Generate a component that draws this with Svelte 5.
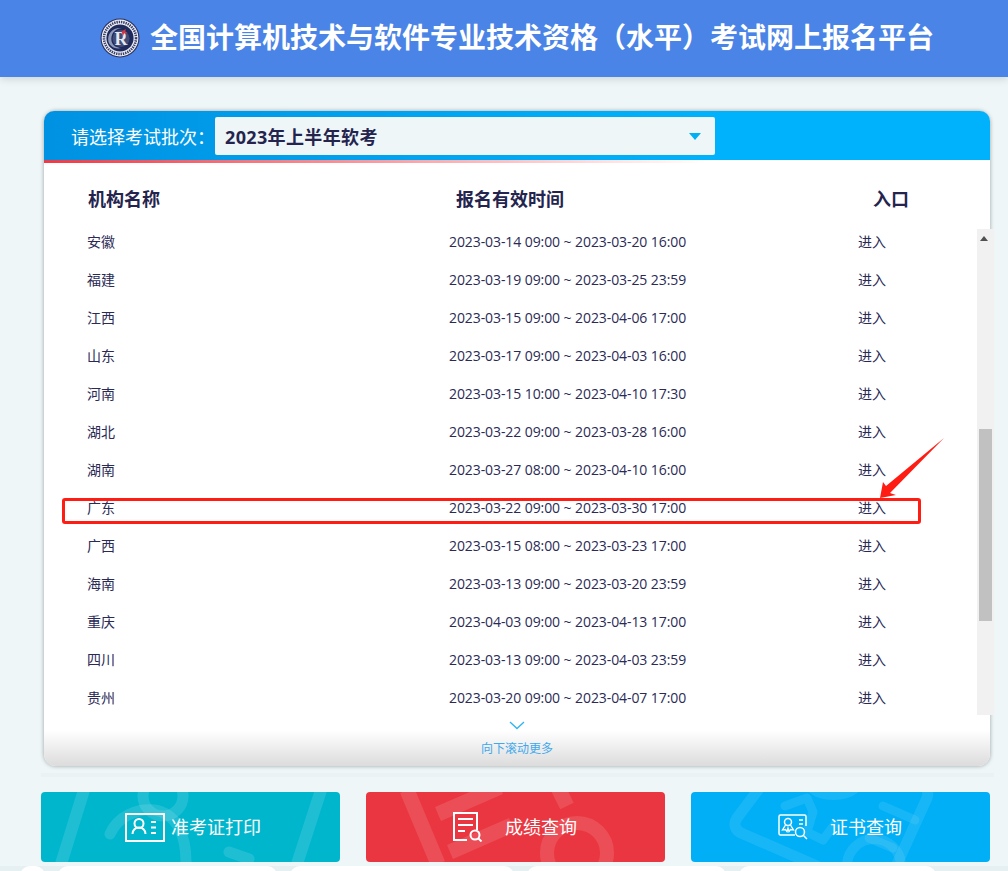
<script lang="ts">
	const rows = [
		['安徽', '2023-03-14 09:00 ~ 2023-03-20 16:00'],
		['福建', '2023-03-19 09:00 ~ 2023-03-25 23:59'],
		['江西', '2023-03-15 09:00 ~ 2023-04-06 17:00'],
		['山东', '2023-03-17 09:00 ~ 2023-04-03 16:00'],
		['河南', '2023-03-15 10:00 ~ 2023-04-10 17:30'],
		['湖北', '2023-03-22 09:00 ~ 2023-03-28 16:00'],
		['湖南', '2023-03-27 08:00 ~ 2023-04-10 16:00'],
		['广东', '2023-03-22 09:00 ~ 2023-03-30 17:00'],
		['广西', '2023-03-15 08:00 ~ 2023-03-23 17:00'],
		['海南', '2023-03-13 09:00 ~ 2023-03-20 23:59'],
		['重庆', '2023-04-03 09:00 ~ 2023-04-13 17:00'],
		['四川', '2023-03-13 09:00 ~ 2023-04-03 23:59'],
		['贵州', '2023-03-20 09:00 ~ 2023-04-07 17:00']
	];

	const peeks = [25, 219, 224, 199, 197];
</script>

<div class="page">
	<header>
		<svg class="logo" viewBox="0 0 40 40" aria-hidden="true">
			<circle cx="20" cy="20" r="19.5" fill="#2b2f5e" />
			<circle cx="20" cy="20" r="18.4" fill="#eef0f4" />
			<circle cx="20" cy="20" r="16" fill="none" stroke="#3b3f6b" stroke-width="2.6" stroke-dasharray="1.4 0.9" />
			<circle cx="20" cy="20" r="13.6" fill="#1f2a5c" />
			<path d="M8.500 24c-2-9 5-15 13-14-7 1-11 6-10 13 1 5 6 7 10 7-6 1.500-11-1-13-6z" fill="#8d97b8" />
			<circle cx="21" cy="20.500" r="8.500" fill="#dfe3ec" opacity="0.18" />
			<text x="21" y="27" text-anchor="middle" class="logo-r">R</text>
			<path d="M21.500 13.500l4.500-2.500-1 2.500 2.500 1-3.500 1-1 2.500z" fill="#d8343f" />
		</svg>
		<h1>全国计算机技术与软件专业技术资格（水平）考试网上报名平台</h1>
	</header>

	<section class="card">
		<div class="bar">
			<span class="bar-label">请选择考试批次：</span>
			<div class="select">
				<span>2023年上半年软考</span>
				<i class="caret"></i>
			</div>
		</div>
		<div class="stripe"></div>

		<div class="thead">
			<span class="col-name">机构名称</span>
			<span class="col-time">报名有效时间</span>
			<span class="col-entry">入口</span>
		</div>

		<div class="body">
			<div class="list">
				{#each rows as [name, time]}
					<div class="row">
						<span class="cell-name">{name}</span>
						<span class="cell-time">{time}</span>
						<span class="cell-entry">进入</span>
					</div>
				{/each}
			</div>
			<div class="scrollbar">
				<i class="scroll-up"></i>
				<div class="thumb"></div>
			</div>
		</div>

		<div class="more">
			<svg class="chevron" viewBox="0 0 16 9" aria-hidden="true">
				<path d="M1 1l7 6.500L15 1" fill="none" stroke="#2fb4f2" stroke-width="1.300" />
			</svg>
			<span>向下滚动更多</span>
		</div>
	</section>

	<div class="divider"></div>

	<nav class="actions">
		<a class="action teal">
			<svg class="deco" viewBox="0 0 299 70" aria-hidden="true">
				<g fill="none" stroke="#fff" stroke-opacity="0.12" stroke-linecap="round">
					<path d="M43-2L20 72M280-2L256 72" stroke-width="12" stroke-linecap="butt" />
					<circle cx="122" cy="4" r="20" stroke-width="11" />
					<path d="M69 42c8-18 28-26 44-24 22 3 32 24 32 52" stroke-width="11" />
					<path d="M188 60l20 7" stroke-width="11" />
				</g>
			</svg>
			<span class="action-in">
				<svg class="ico card-ico" viewBox="0 0 40 29" aria-hidden="true">
					<g fill="none" stroke="#fff">
						<rect x="1" y="1" width="38" height="27" stroke-width="2" />
						<circle cx="14" cy="10.500" r="4.500" stroke-width="2" />
						<path d="M7.500 21c0-4 3-6.500 6.500-6.500s6.500 2.500 6.500 6.500" stroke-width="2" />
						<path d="M26 9h5M26 14.500h5M26 20h5" stroke-width="2" />
					</g>
				</svg>
				<span class="label">准考证打印</span>
			</span>
		</a>

		<a class="action red">
			<svg class="deco" viewBox="0 0 299 70" aria-hidden="true">
				<g fill="none" stroke="#fff" stroke-opacity="0.12">
					<path d="M41-2L72 72" stroke-width="15" />
					<path d="M72 22L134-5M84 60L146 33" stroke-width="15" />
					<path d="M192-4l9 18" stroke-width="15" />
					<circle cx="211" cy="61" r="30" stroke-width="14" />
				</g>
			</svg>
			<span class="action-in">
				<svg class="ico doc-ico" viewBox="0 0 30 30" aria-hidden="true">
					<g fill="none" stroke="#fff" stroke-width="2">
						<path d="M14 28H1V1h23v17" />
						<path d="M5 7h15M5 13h15M5 19h7" />
						<circle cx="22" cy="23" r="4.500" />
						<path d="M25.500 26.500l3 3" />
					</g>
				</svg>
				<span class="label label-red">成绩查询</span>
			</span>
		</a>

		<a class="action blue">
			<svg class="deco" viewBox="0 0 299 70" aria-hidden="true">
				<g fill="none" stroke="#fff" stroke-opacity="0.09" stroke-linecap="round" stroke-linejoin="round">
					<path d="M76-14L46 26c-4 6-2 12 4 15l76 33M210-14c18 2 30 6 26 20l-30 66" stroke-width="11" />
					<path d="M118-8c10 14 38 14 50 0" stroke-width="11" />
					<path d="M94 14l22-8 6 14-6 20 16 8 12-16" stroke-width="9" />
					<path d="M192 14l32 14M178 46l24 10" stroke-width="9" />
					<circle cx="183" cy="74" r="27" stroke-width="10" />
				</g>
			</svg>
			<span class="action-in">
				<svg class="ico cert-ico" viewBox="0 0 30 26" aria-hidden="true">
					<g fill="none" stroke="#fff">
						<path d="M17 21H2.500Q1 21 1 19.500V2.500Q1 1 2.500 1h24Q28 1 28 2.500V12" stroke-width="1.500" />
						<circle cx="10" cy="8" r="3.500" stroke-width="1.500" />
						<path d="M7.500 11L4.500 16l3-.5 1.500 2 1-3.500 1 3.500 1.500-2 3 .5-3-5" stroke-width="1.300" />
						<path d="M21 6h4M21 10h4" stroke-width="1.300" />
						<circle cx="22" cy="18" r="4.500" stroke-width="1.500" />
						<path d="M25.500 21.500l3.500 3.500" stroke-width="1.500" />
					</g>
				</svg>
				<span class="label label-blue">证书查询</span>
			</span>
		</a>
	</nav>

	<div class="peek">
		{#each peeks as w}
			<div class="peek-card" style="width: {w}px"></div>
		{/each}
	</div>

	<!-- screenshot markup: box round the Guangdong row and the arrow -->
	<div class="mark-box"></div>
	<svg class="mark-arrow" viewBox="0 0 70 66" aria-hidden="true">
		<path d="M66 1L8 49 5 45 2 61 18 58 12 56z" fill="#ff1c12" />
	</svg>
</div>

<style>
	:global(body) {
		background: #eef6f8;
	}

	.page {
		position: relative;
		height: 871px;
		overflow: hidden;
		background: #eef6f8;
		font-family: 'Noto Sans CJK SC', 'Open Sans', sans-serif;
		color: #24244e;
	}

	header {
		height: 77px;
		box-sizing: border-box;
		padding: 0 0 2px 100px;
		display: flex;
		align-items: center;
		gap: 10px;
		background: #4a84e6;
		box-shadow: 0 2px 8px rgba(0, 0, 0, 0.14);
	}

	.logo {
		width: 40px;
		height: 40px;
		flex: none;
	}

	.logo-r {
		font-family: 'Liberation Serif', serif;
		font-size: 18px;
		font-weight: 700;
		fill: #e4e7ef;
	}

	h1 {
		margin: 0 0 4px;
		font-size: 28px;
		font-weight: 700;
		line-height: 1;
		color: #fff;
		white-space: nowrap;
	}

	.card {
		width: 946px;
		margin: 34px 0 0 44px;
		height: 655px;
		background: #fff;
		border-radius: 12px;
		box-shadow: 0 0 4px rgba(0, 0, 0, 0.35);
		display: flex;
		flex-direction: column;
	}

	.bar {
		height: 49px;
		box-sizing: border-box;
		padding: 6px 0 5px 27px;
		display: flex;
		align-items: stretch;
		border-radius: 10px 10px 0 0;
		background: linear-gradient(90deg, #0092e2, #00b2fb 70%);
	}

	.bar-label {
		width: 144px;
		flex: none;
		font-size: 18px;
		line-height: 38px;
		color: #fff;
		white-space: nowrap;
	}

	.select {
		width: 500px;
		box-sizing: border-box;
		padding: 0 14px 0 10px;
		display: flex;
		align-items: center;
		justify-content: space-between;
		background: #eef6f8;
		border-radius: 2px;
		font-family: 'Open Sans', 'Noto Sans CJK SC', sans-serif;
		font-size: 18px;
		font-weight: 700;
		letter-spacing: 0.36px;
		color: #24244e;
	}

	.caret {
		width: 0;
		height: 0;
		border-left: 6px solid transparent;
		border-right: 6px solid transparent;
		border-top: 7px solid #00b0f5;
	}

	.stripe {
		height: 3px;
		background: linear-gradient(90deg, #ee3a45, rgba(238, 58, 69, 0) 70%);
	}

	.thead {
		height: 66px;
		flex: none;
		display: grid;
		grid-template-columns: 359px 250px 1fr;
		padding: 0 0 0 44px;
		font-size: 18px;
		font-weight: 700;
		line-height: 70px;
	}

	.col-time {
		margin-left: 9px;
		white-space: nowrap;
	}

	.col-entry {
		margin-left: 176px;
	}

	.body {
		display: flex;
		height: 486px;
		flex: none;
		margin-right: -4px;
	}

	.list {
		flex: 1;
		overflow: hidden;
	}

	.row {
		height: 38px;
		display: flex;
		align-items: center;
		padding-left: 43px;
		font-size: 14px;
		color: #2a2a55;
	}

	.row:first-child {
		margin-top: -7px;
	}

	.cell-name {
		width: 362px;
	}

	.cell-time {
		width: 237px;
		font-family: 'Open Sans', 'Noto Sans CJK SC', sans-serif;
		letter-spacing: -0.085px;
		white-space: nowrap;
	}

	.cell-entry {
		margin-left: 172px;
	}

	.scrollbar {
		position: relative;
		width: 17px;
		flex: none;
		background: #f1f1f1;
	}

	.scroll-up {
		position: absolute;
		top: 7px;
		left: 3px;
		width: 0;
		height: 0;
		border-left: 4px solid transparent;
		border-right: 4px solid transparent;
		border-bottom: 5px solid #505050;
	}

	.thumb {
		position: absolute;
		top: 200px;
		left: 2px;
		width: 13px;
		height: 192px;
		background: #c1c1c1;
	}

	.more {
		flex: 1;
		display: flex;
		flex-direction: column;
		align-items: center;
		border-radius: 0 0 12px 12px;
		background: linear-gradient(#fff 30%, #dcdcdc);
		font-size: 12px;
		color: #3fa9ec;
	}

	.chevron {
		width: 16px;
		height: 9px;
		margin-top: 6px;
	}

	.more span {
		margin-top: 9px;
		line-height: 18px;
	}

	.divider {
		height: 4px;
		margin: 7px 14px 0 41px;
		background: #ebf2f4;
	}

	.actions {
		display: grid;
		grid-template-columns: repeat(3, 299px);
		gap: 26px;
		margin: 15px 0 0 41px;
	}

	.action {
		position: relative;
		height: 70px;
		border-radius: 4px;
		overflow: hidden;
		display: flex;
		align-items: center;
		color: #fff;
		font-size: 18px;
	}

	.teal {
		background: #00b6cd;
	}

	.red {
		background: #ea3640;
	}

	.blue {
		background: #00aff6;
	}

	.deco {
		position: absolute;
		inset: 0;
		width: 299px;
		height: 70px;
	}

	.action-in {
		position: relative;
		display: flex;
		align-items: center;
	}

	.label {
		margin-bottom: 2px;
	}

	.card-ico {
		width: 40px;
		height: 29px;
		margin: 0 6px 0 84px;
	}

	.doc-ico {
		width: 30px;
		height: 30px;
		margin: 0 0 0 87px;
	}

	.cert-ico {
		width: 30px;
		height: 26px;
		margin: 0 0 0 87px;
	}

	.label-red {
		margin-left: 22px;
	}

	.label-blue {
		margin-left: 22px;
	}

	.peek {
		display: flex;
		gap: 13px;
		height: 9px;
		margin-top: 4px;
		padding-left: 20px;
		background: #e6f0f3;
	}

	.peek-card {
		height: 20px;
		flex: none;
		background: #fff;
		border-radius: 14px;
	}

	.mark-box {
		position: absolute;
		left: 62px;
		top: 498px;
		width: 859px;
		height: 26px;
		box-sizing: border-box;
		border: 3px solid #ff1c12;
		border-radius: 3px;
	}

	.mark-arrow {
		position: absolute;
		left: 878px;
		top: 437px;
		width: 70px;
		height: 66px;
	}
</style>
